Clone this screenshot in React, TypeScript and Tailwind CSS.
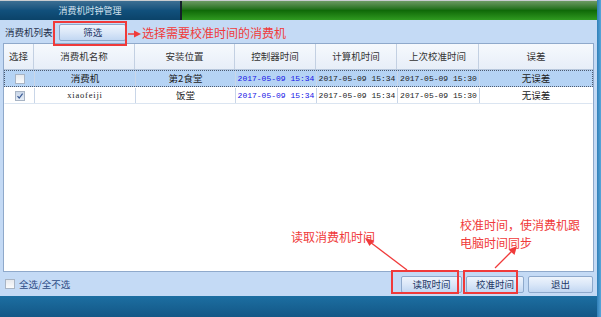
import React from "react";

const cjk = { fontFamily: '"Noto Sans CJK SC", "Noto Sans", sans-serif' };
const mono = { fontFamily: '"Liberation Mono", "DejaVu Sans Mono", monospace' };

const cols = "grid grid-cols-[30px_101px_100px_81px_81px_82px_1fr]";

type Row = { name: string; latin?: boolean; place: string; ctrl: string; pc: string; last: string; diff: string; checked: boolean; selected: boolean };

const rows: Row[] = [
  { name: "消费机", place: "第2食堂", ctrl: "2017-05-09 15:34", pc: "2017-05-09 15:34", last: "2017-05-09 15:30", diff: "无误差", checked: false, selected: true },
  { name: "xiaofeiji", latin: true, place: "饭堂", ctrl: "2017-05-09 15:34", pc: "2017-05-09 15:34", last: "2017-05-09 15:30", diff: "无误差", checked: true, selected: false },
];

function Check({ checked }: { checked: boolean }) {
  return (
    <span className={`inline-flex h-[10px] w-[10px] items-center justify-center border border-[#a8b4c4] ${checked ? "bg-gradient-to-b from-[#c9d6e8] to-[#e6edf6]" : "bg-gradient-to-b from-[#e6e9ee] to-[#fafbfc]"}`}>
      {checked && (
        <svg width="8" height="8" viewBox="0 0 8 8"><path d="M1.5 4.2 L3.2 6 L6.6 1.6" fill="none" stroke="#3a5a94" strokeWidth="1.2" /></svg>
      )}
    </span>
  );
}

function Btn({ label, w }: { label: string; w: string }) {
  return (
    <div className={`${w} flex h-[17px] items-center justify-center rounded-[2px] border border-[#8ea9cc] bg-gradient-to-b from-[#eef4fc] via-[#dae7f8] to-[#c2d7f2] text-[9.5px] text-[#1d3766]`} style={cjk}>
      {label}
    </div>
  );
}

export default function App() {
  return (
    <div className="relative flex h-[317px] w-[601px] overflow-hidden bg-[#c4daf5]" style={cjk}>
      <div className="flex w-[597px] flex-col">
        {/* title bar */}
        <div className="flex h-[20px] border-t border-[#c9ccd0]">
          <div className="flex w-[180px] items-center justify-center bg-gradient-to-b from-[#3c6f93] via-[#11507c] to-[#0b4369] text-[9px] text-[#d4e2ee]">
            消费机时钟管理
          </div>
          <div className="w-[2px] bg-[#14202a]" />
          <div className="flex-1 bg-gradient-to-b from-[#6b9a62] via-[#0f6a08] to-[#2f9a20]" />
        </div>

        {/* body */}
        <div className="flex flex-1 flex-col px-[3px]">
          <div className="flex h-[23px] items-center gap-[4px] pl-[2px] pt-[2px]">
            <span className="text-[9.5px] text-[#1f2f4a]">消费机列表:</span>
            <Btn label="筛选" w="w-[67px]" />
          </div>

          <div className="flex h-[229px] flex-col border border-[#8fa9cb] bg-white text-[9.5px] text-[#222]">
            <div className={`${cols} h-[26px] border-b border-[#b7c7dc] bg-gradient-to-b from-[#f6f9fd] to-[#e7eef8] text-[#333]`}>
              {["选择", "消费机名称", "安装位置", "控制器时间", "计算机时间", "上次校准时间", "误差"].map((h, i) => (
                <div key={h} className={`flex items-center justify-center ${i < 6 ? "border-r border-[#c3d0e2]" : ""}`}>{h}</div>
              ))}
            </div>
            {rows.map((r) => (
              <div key={r.name} className={`${cols} h-[17px] ${r.selected ? "border border-dotted border-[#4d5b70] bg-[#b5d3f4]" : "border border-transparent border-b-[#dbe5f1]"}`}>
                <div className="flex items-center justify-center border-r border-[#c9d6e8]"><Check checked={r.checked} /></div>
                <div className="flex items-center justify-center border-r border-[#c9d6e8]" style={r.latin ? { fontFamily: '"Liberation Serif", serif', letterSpacing: "0.8px", fontSize: "8.5px" } : undefined}>{r.name}</div>
                <div className="flex items-center justify-center border-r border-[#c9d6e8]">{r.place}</div>
                <div className="flex items-center justify-center border-r border-[#c9d6e8] text-[8px] text-[#1515e6]" style={mono}>{r.ctrl}</div>
                <div className="flex items-center justify-center border-r border-[#c9d6e8] text-[8px]" style={mono}>{r.pc}</div>
                <div className="flex items-center justify-center border-r border-[#c9d6e8] text-[8px]" style={mono}>{r.last}</div>
                <div className="flex items-center justify-center">{r.diff}</div>
              </div>
            ))}
          </div>

          <div className="flex h-[24px] items-center">
            <div className="flex items-center gap-[4px] pl-[2px] text-[9.5px] text-[#2d4c86]">
              <Check checked={false} />
              <span>全选/全不选</span>
            </div>
            <div className="ml-auto flex gap-[4px] pr-[1px]">
              <Btn label="读取时间" w="w-[61px]" />
              <Btn label="校准时间" w="w-[58px]" />
              <Btn label="退出" w="w-[65px]" />
            </div>
          </div>
        </div>

        {/* bottom bar */}
        <div className="h-[21px] bg-gradient-to-b from-[#1d6fa2] to-[#135786]" />
      </div>
      <div className="w-[4px] bg-gradient-to-r from-[#2f7fb8] to-[#58a6da]" />

      {/* annotations */}
      <div className="absolute left-[53px] top-[21px] h-[25px] w-[74px] border-2 border-[#f03a3a]" />
      <div className="absolute left-[391px] top-[270px] h-[24px] w-[68px] border-2 border-[#f03a3a]" />
      <div className="absolute left-[463px] top-[270px] h-[24px] w-[55px] border-2 border-[#f03a3a]" />

      <div className="absolute left-[142px] top-[25px] text-[12px] leading-[16px] text-[#f03a3a]">选择需要校准时间的消费机</div>
      <div className="absolute left-[291px] top-[229px] text-[12px] leading-[16px] text-[#f03a3a]">读取消费机时间</div>
      <div className="absolute left-[460px] top-[216px] text-[12px] leading-[18px] text-[#f03a3a]">
        校准时间，使消费机跟<br />电脑时间同步
      </div>

      <svg className="absolute left-0 top-0" width="601" height="317" viewBox="0 0 601 317" fill="none">
        <line x1="128" y1="34" x2="136" y2="34" stroke="#f03a3a" strokeWidth="1.5" />
        <path d="M141 34 L134 30.5 L134 37.5 Z" fill="#f03a3a" />
        <line x1="407" y1="270" x2="370" y2="242" stroke="#f03a3a" strokeWidth="1.3" />
        <path d="M365 238 L374 240.5 L369.5 246 Z" fill="#f03a3a" />
        <line x1="495" y1="268" x2="512" y2="251" stroke="#f03a3a" strokeWidth="1.3" />
        <path d="M517 246 L514.5 255 L508.5 249.5 Z" fill="#f03a3a" />
      </svg>
    </div>
  );
}
